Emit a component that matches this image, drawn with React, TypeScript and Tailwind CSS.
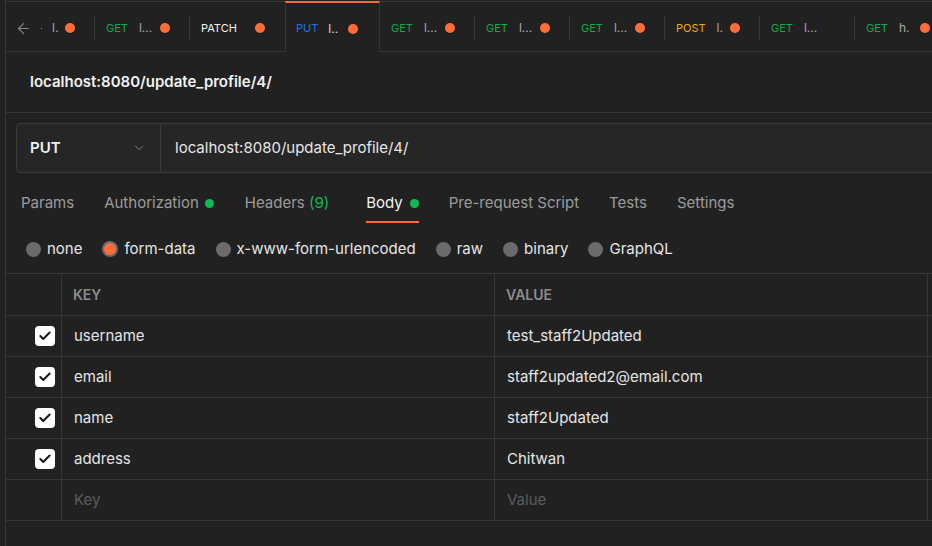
import React from 'react';
import { ArrowLeft, ChevronDown, Check } from 'lucide-react';

type Tab = { m: string; c: string; n: string; dot: boolean; active?: boolean };

const tabs: Tab[] = [
  { m: 'GET', c: 'text-[#11aa48]', n: 'l...', dot: true },
  { m: 'PATCH', c: 'text-[#f2f2f2]', n: '', dot: true },
  { m: 'PUT', c: 'text-[#1a73e8]', n: 'l..', dot: true, active: true },
  { m: 'GET', c: 'text-[#11aa48]', n: 'l...', dot: true },
  { m: 'GET', c: 'text-[#11aa48]', n: 'l...', dot: true },
  { m: 'GET', c: 'text-[#11aa48]', n: 'l...', dot: true },
  { m: 'POST', c: 'text-[#f5a70c]', n: 'l.', dot: true },
  { m: 'GET', c: 'text-[#11aa48]', n: 'l...', dot: false },
  { m: 'GET', c: 'text-[#11aa48]', n: 'h.', dot: true },
];

const rows = [
  { k: 'username', v: 'test_staff2Updated' },
  { k: 'email', v: 'staff2updated2@email.com' },
  { k: 'name', v: 'staff2Updated' },
  { k: 'address', v: 'Chitwan' },
];

function Dot({ cls = 'bg-[#ff6c37]' }: { cls?: string }) {
  return <span className={`block w-[10px] h-[10px] rounded-full shrink-0 ${cls}`} />;
}

export default function App() {
  return (
    <div className="w-[932px] h-[546px] bg-[#212121] overflow-hidden flex font-[Inter,sans-serif] text-[#e6e6e6]">
      <div className="w-[6px] shrink-0 border-r border-[#363636]" />
      <div className="flex-1 min-w-0 flex flex-col">
        {/* request tabs */}
        <div className="mt-px h-[51px] shrink-0 border-t border-b border-[#363636] flex">
          <div className="w-[89px] shrink-0 flex items-center pt-[3px]">
            <ArrowLeft size={17} strokeWidth={1.5} className="text-[#8a8a8a] ml-[9px] shrink-0" />
            <span className="ml-[9px] w-px h-px bg-[#ff6c37]" />
            <span className="ml-[10px] w-[13px] text-[12px] text-[#a9a9a9]">l.</span>
            <Dot />
            <span className="ml-auto w-px h-[24px] bg-[#363636]" />
          </div>
          {tabs.map((t, i) => {
            const nextActive = tabs[i + 1]?.active;
            if (t.active) {
              return (
                <div
                  key={i}
                  className="w-[95px] shrink-0 -mt-px h-[51px] border-t-2 border-t-[#ff6c37] border-x border-x-[#363636] bg-[#212121] flex items-center pl-[10px] pt-[2px]"
                >
                  <div className="w-[52px] flex items-center whitespace-nowrap overflow-hidden">
                    <span className={`text-[11px] ${t.c}`}>{t.m}</span>
                    <span className="ml-[10px] text-[12px] text-[#d9d9d9]">{t.n}</span>
                  </div>
                  <Dot />
                </div>
              );
            }
            return (
              <div key={i} className="w-[95px] shrink-0 flex items-center pl-[11px] pt-[3px]">
                <div className="w-[54px] flex items-center whitespace-nowrap overflow-hidden">
                  <span className={`text-[11px] ${t.c}`}>{t.m}</span>
                  {t.n && <span className="ml-[11px] text-[12px] text-[#a9a9a9]">{t.n}</span>}
                </div>
                {t.dot && <Dot />}
                {!nextActive && <span className="ml-auto w-px h-[24px] bg-[#363636]" />}
              </div>
            );
          })}
        </div>

        {/* title */}
        <div className="h-[61px] shrink-0 border-b border-[#363636] flex items-center pl-[24px]">
          <span className="text-[15px] leading-[20px] font-semibold text-[#f2f2f2]">localhost:8080/update_profile/4/</span>
        </div>

        {/* url bar */}
        <div className="mt-[10px] ml-[10px] w-[960px] h-[50px] shrink-0 rounded-[4px] border border-[#3a3a3a] bg-[#262626] flex">
          <div className="w-[144px] shrink-0 border-r border-[#3a3a3a] flex items-center pl-[13px] pr-[14px]">
            <span className="text-[15px] font-semibold text-[#f2f2f2]">PUT</span>
            <ChevronDown size={14} strokeWidth={1.5} className="ml-auto text-[#8a8a8a]" />
          </div>
          <div className="flex items-center pl-[14px]">
            <span className="text-[15px] text-[#e6e6e6]">localhost:8080/update_profile/4/</span>
          </div>
        </div>

        {/* section tabs */}
        <div className="mt-[20px] flex text-[15px] leading-[20px] text-[#9c9c9c]">
          <div className="px-[15px] flex flex-col"><span className="h-[20px]">Params</span></div>
          <div className="px-[15px] flex flex-col">
            <span className="h-[20px] flex items-center gap-[6px]">Authorization<span className="w-[9px] h-[9px] rounded-full bg-[#0cbb52]" /></span>
          </div>
          <div className="pl-[16px] pr-[22px] flex flex-col">
            <span className="h-[20px]">Headers <span className="text-[#0cbb52]">(9)</span></span>
          </div>
          <div className="px-[15px] flex flex-col">
            <span className="h-[20px] flex items-center gap-[7px] text-[#f2f2f2]">Body<span className="w-[9px] h-[9px] rounded-full bg-[#0cbb52]" /></span>
            <span className="mt-[8px] h-[2px] bg-[#ff6c37]" />
          </div>
          <div className="px-[15px] flex flex-col"><span className="h-[20px]">Pre-request Script</span></div>
          <div className="px-[15px] flex flex-col"><span className="h-[20px]">Tests</span></div>
          <div className="px-[15px] flex flex-col"><span className="h-[20px]">Settings</span></div>
        </div>

        {/* body type radios */}
        <div className="mt-[16px] h-[20px] pl-[20px] flex items-center gap-[20px] text-[15px] leading-[20px] text-[#e6e6e6]">
          {['none', 'form-data', 'x-www-form-urlencoded', 'raw', 'binary', 'GraphQL'].map((r) => (
            <div key={r} className="flex items-center gap-[6px]">
              {r === 'form-data' ? (
                <span className="w-[16px] h-[16px] rounded-full bg-[#6b6b6b] flex items-center justify-center">
                  <span className="w-[12px] h-[12px] rounded-full bg-[#ff6c37]" />
                </span>
              ) : (
                <span className="w-[15px] h-[15px] rounded-full bg-[#6b6b6b]" />
              )}
              <span>{r}</span>
            </div>
          ))}
        </div>

        {/* table */}
        <div className="mt-[14px] w-[1150px] border-t border-[#363636]">
          <div className="grid grid-cols-[56px_433px_433px_228px] h-[42px] border-b border-[#363636]">
            <div className="border-r border-[#363636]" />
            <div className="border-r border-[#363636] flex items-center pl-[11px] text-[14px] font-semibold text-[#8c8c8c]">KEY</div>
            <div className="border-r border-[#363636] flex items-center pl-[11px] text-[14px] font-semibold text-[#8c8c8c]">VALUE</div>
            <div />
          </div>
          {rows.map((r) => (
            <div key={r.k} className="grid grid-cols-[56px_433px_433px_228px] h-[41px] border-b border-[#363636]">
              <div className="border-r border-[#363636] flex items-center justify-end pr-[6px]">
                <span className="w-[20px] h-[20px] rounded-[4px] bg-white flex items-center justify-center">
                  <Check size={14} strokeWidth={3.5} className="text-[#1a1a1a]" />
                </span>
              </div>
              <div className="border-r border-[#363636] flex items-center pl-[12px] text-[15px] text-[#e6e6e6]">{r.k}</div>
              <div className="border-r border-[#363636] flex items-center pl-[12px] text-[15px] text-[#e6e6e6]">{r.v}</div>
              <div />
            </div>
          ))}
          <div className="grid grid-cols-[56px_433px_433px_228px] h-[41px] border-b border-[#363636]">
            <div className="border-r border-[#363636]" />
            <div className="border-r border-[#363636] flex items-center pl-[12px] text-[15px] text-[#5c5c5c]">Key</div>
            <div className="border-r border-[#363636] flex items-center pl-[12px] text-[15px] text-[#5c5c5c]">Value</div>
            <div />
          </div>
        </div>
      </div>
    </div>
  );
}
